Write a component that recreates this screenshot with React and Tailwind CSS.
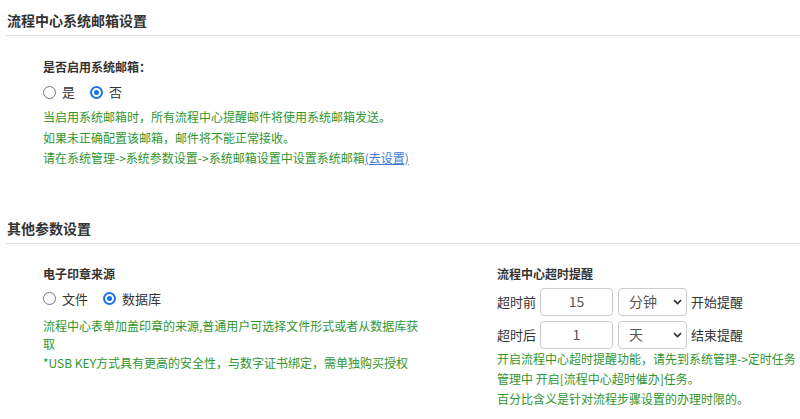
import React, { useState } from "react";

const font = {
  fontFamily: '"Microsoft YaHei", "Noto Sans CJK SC", sans-serif',
};

function SectionTitle({ children, className = "" }) {
  return (
    <div className={`ml-[6px] border-b border-[#dddddd] pl-[1px] pt-[10px] pb-[5px] ${className}`}>
      <h2 className="text-[14px] leading-[20px] font-bold text-[#333]">{children}</h2>
    </div>
  );
}

function Radio({ checked, label, onClick }) {
  return (
    <label className="flex items-center mr-[15px] cursor-pointer" onClick={onClick}>
      {checked ? (
        <span className="w-[13px] h-[13px] rounded-full border-[2px] border-[#1a73e8] flex items-center justify-center">
          <span className="w-[5px] h-[5px] rounded-full bg-[#1a73e8]" />
        </span>
      ) : (
        <span className="w-[13px] h-[13px] rounded-full border border-[#767676]" />
      )}
      <span className="ml-[6px] text-[13px] leading-[20px] text-[#333]">{label}</span>
    </label>
  );
}

function Chevron() {
  return (
    <svg width="9" height="6" viewBox="0 0 9 6" fill="none">
      <path d="M1 1.2 L4.5 4.6 L8 1.2" stroke="#333" strokeWidth="1.7" />
    </svg>
  );
}

function Select({ value }) {
  return (
    <div className="ml-[5px] w-[69px] h-[28px] border border-[#cccccc] rounded-[4px] flex items-center justify-between pl-[10px] pr-[4px]">
      <span className="text-[14px] text-[#555]">{value}</span>
      <Chevron />
    </div>
  );
}

function TimeRow({ label, num, unit, after, className = "" }) {
  return (
    <div className={`flex items-center ${className}`}>
      <span className="text-[13px] text-[#333] w-[43px]">{label}</span>
      <div className="w-[73px] h-[28px] border border-[#cccccc] rounded-[4px] flex items-center justify-center text-[14px] text-[#555]">
        {num}
      </div>
      <Select value={unit} />
      <span className="ml-[4px] text-[13px] text-[#333]">{after}</span>
    </div>
  );
}

export default function App() {
  const [useMail, setUseMail] = useState(false);
  const [sealSrc, setSealSrc] = useState("db");

  return (
    <div className="w-[800px] h-[419px] bg-white overflow-hidden" style={font}>
      <SectionTitle>流程中心系统邮箱设置</SectionTitle>
      <div className="pl-[43px]">
        <p className="mt-[21px] text-[12px] leading-[20px] font-bold text-[#333]">是否启用系统邮箱：</p>
        <div className="mt-[5px] flex h-[20px]">
          <Radio checked={useMail} label="是" onClick={() => setUseMail(true)} />
          <Radio checked={!useMail} label="否" onClick={() => setUseMail(false)} />
        </div>
        <div className="mt-[5px] text-[12px] leading-[20.5px] text-[#2f962f]">
          <p>当启用系统邮箱时，所有流程中心提醒邮件将使用系统邮箱发送。</p>
          <p>如果未正确配置该邮箱，邮件将不能正常接收。</p>
          <p>
            请在系统管理-&gt;系统参数设置-&gt;系统邮箱设置中设置系统邮箱
            <a href="#" className="text-[#3a7bd5] underline">(去设置)</a>
          </p>
        </div>
      </div>

      <SectionTitle className="mt-[39px]">其他参数设置</SectionTitle>
      <div className="flex mt-[20px]">
        <div className="w-[497px] pl-[43px]">
          <p className="text-[12px] leading-[20px] font-bold text-[#333]">电子印章来源</p>
          <div className="mt-[5px] flex h-[20px]">
            <Radio checked={sealSrc === "file"} label="文件" onClick={() => setSealSrc("file")} />
            <Radio checked={sealSrc === "db"} label="数据库" onClick={() => setSealSrc("db")} />
          </div>
          <div className="mt-[8px] text-[12px] leading-[18.5px] text-[#2f962f] whitespace-nowrap">
            <p>流程中心表单加盖印章的来源,普通用户可选择文件形式或者从数据库获</p>
            <p>取</p>
            <p>*USB KEY方式具有更高的安全性，与数字证书绑定，需单独购买授权</p>
          </div>
        </div>
        <div className="flex-1">
          <p className="text-[12px] leading-[20px] font-bold text-[#333]">流程中心超时提醒</p>
          <TimeRow className="mt-[4px]" label="超时前" num="15" unit="分钟" after="开始提醒" />
          <TimeRow className="mt-[5px]" label="超时后" num="1" unit="天" after="结束提醒" />
          <div className="text-[12px] leading-[20px] text-[#2f962f] whitespace-nowrap">
            <p>开启流程中心超时提醒功能，请先到系统管理-&gt;定时任务</p>
            <p>管理中 开启[流程中心超时催办]任务。</p>
            <p>百分比含义是针对流程步骤设置的办理时限的。</p>
          </div>
        </div>
      </div>
    </div>
  );
}
